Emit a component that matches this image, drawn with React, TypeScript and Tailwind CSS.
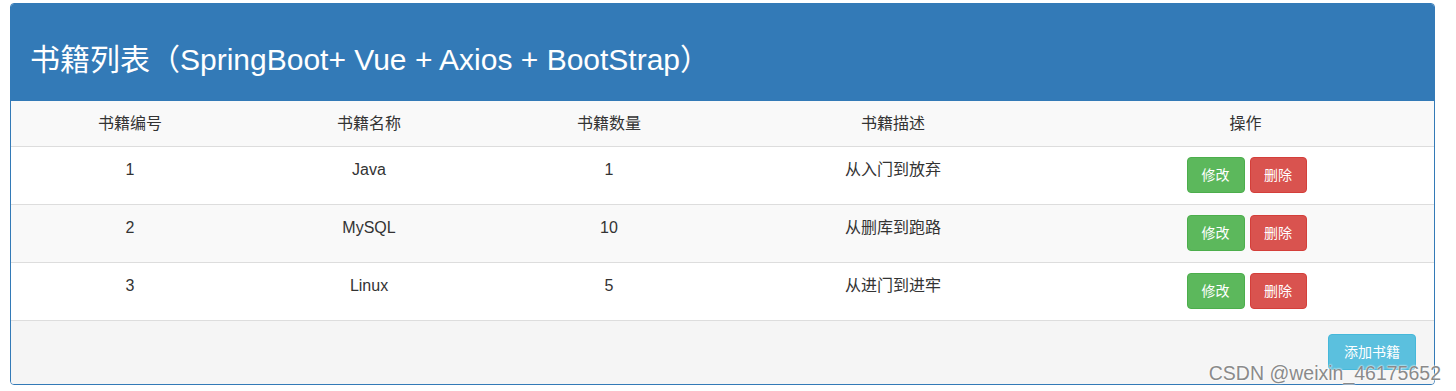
import React from "react";

const books = [
  { id: 1, name: "Java", count: 1, desc: "从入门到放弃" },
  { id: 2, name: "MySQL", count: 10, desc: "从删库到跑路" },
  { id: 3, name: "Linux", count: 5, desc: "从进门到进牢" },
];

const App = () => {
  return (
    <div className="relative min-h-[391px] bg-white pt-[3px] pl-[10px] text-[#333] font-['Liberation_Sans','Noto_Sans_CJK_SC',sans-serif]">
      <div className="w-[1425px] rounded-[4px] border border-[#337ab7] overflow-hidden">
        {/* heading */}
        <div className="bg-[#337ab7] pl-[19px] pt-[39px] pb-[25px] text-white">
          <h1 className="text-[30px] leading-[33px]">书籍列表（SpringBoot+ Vue + Axios + BootStrap）</h1>
        </div>

        <table className="w-full table-fixed border-collapse text-[16px] text-center">
          <colgroup>
            <col className="w-[238px]" />
            <col className="w-[240px]" />
            <col className="w-[240px]" />
            <col className="w-[328px]" />
            <col />
          </colgroup>
          <thead>
            <tr className="bg-[#f9f9f9] border-b border-[#ddd]">
              <th className="font-normal py-[11px] leading-[23px]">书籍编号</th>
              <th className="font-normal py-[11px] leading-[23px]">书籍名称</th>
              <th className="font-normal py-[11px] leading-[23px]">书籍数量</th>
              <th className="font-normal py-[11px] leading-[23px]">书籍描述</th>
              <th className="font-normal py-[11px] leading-[23px]">操作</th>
            </tr>
          </thead>
          <tbody>
            {books.map((b, i) => (
              <tr key={b.id} className={(i % 2 === 1 ? "bg-[#f9f9f9]" : "bg-white") + " border-b border-[#ddd]"}>
                <td className="align-top py-[11px] leading-[24px]">{b.id}</td>
                <td className="align-top py-[11px] leading-[24px]">{b.name}</td>
                <td className="align-top py-[11px] leading-[24px]">{b.count}</td>
                <td className="align-top py-[11px] leading-[24px]">{b.desc}</td>
                <td className="align-top pt-[10px] pb-[11px]">
                  <div className="flex justify-center gap-[5px] pl-[2px]">
                    <button className="w-[58px] h-[36px] rounded-[4px] border border-[#4cae4c] bg-[#5cb85c] text-white text-[14px]">修改</button>
                    <button className="w-[57px] h-[36px] rounded-[4px] border border-[#d43f3a] bg-[#d9534f] text-white text-[14px]">删除</button>
                  </div>
                </td>
              </tr>
            ))}
          </tbody>
        </table>

        {/* footer */}
        <div className="flex justify-end bg-[#f5f5f5] pt-[13px] pb-[14px] pr-[18px]">
          <button className="w-[88px] h-[36px] rounded-[4px] border border-[#46b8da] bg-[#5bc0de] text-white text-[14px]">添加书籍</button>
        </div>
      </div>

      {/* watermark */}
      <div className="absolute right-[15px] bottom-[7px] text-[19.5px] leading-[22px] text-[#8a8a8a] font-['Liberation_Sans',sans-serif] [text-shadow:0_0_2px_#fff,0_0_2px_#fff]">
        CSDN @weixin_46175652
      </div>
    </div>
  );
};

export default App;
